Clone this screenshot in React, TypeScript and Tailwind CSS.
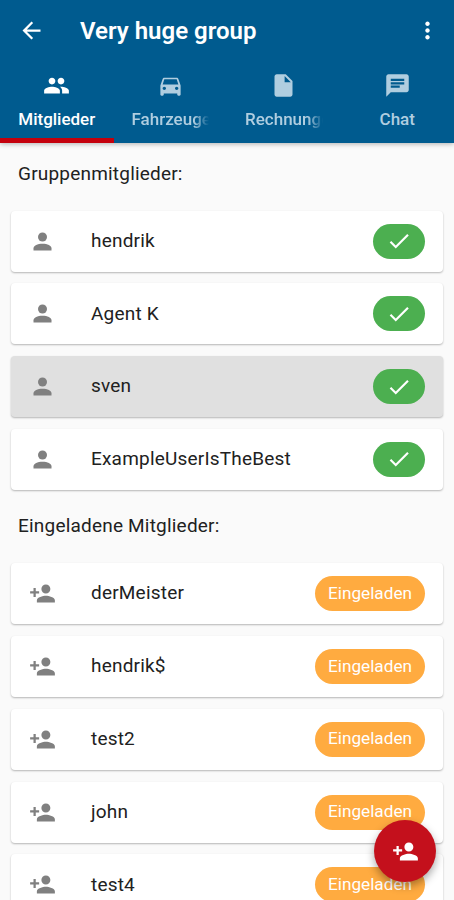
import clsx from "clsx";
import type { ReactNode } from "react";
import type { IconType } from "react-icons";
import {
  MdArrowBack,
  MdChat,
  MdCheck,
  MdDirectionsCar,
  MdInsertDriveFile,
  MdMoreVert,
  MdPeople,
  MdPersonAdd,
} from "react-icons/md";

const tabs: { label: string; icon: IconType; clipped?: boolean }[] = [
  { label: "Mitglieder", icon: MdPeople },
  { label: "Fahrzeuge", icon: MdDirectionsCar, clipped: true },
  { label: "Rechnungen", icon: MdInsertDriveFile, clipped: true },
  { label: "Chat", icon: MdChat },
];

const members = ["hendrik", "Agent K", "sven", "ExampleUserIsTheBest"];
const invited = ["derMeister", "hendrik$", "test2", "john", "test4"];

export default function App() {
  return (
    <div className="relative flex h-[900px] w-[454px] flex-col overflow-hidden bg-[#fafafa] font-[Roboto,sans-serif] text-[#212121]">
      <header className="z-10 shrink-0 bg-[#005b8f] text-white shadow-[0_1px_5px_rgba(0,0,0,0.3)]">
        <div className="flex h-[60px] items-center pr-[13px] pl-[18px]">
          <button aria-label="Zurück">
            <MdArrowBack size={27} />
          </button>
          <h1 className="ml-[35px] flex-1 pt-px text-[24px] font-semibold">Very huge group</h1>
          <button aria-label="Mehr">
            <MdMoreVert size={27} />
          </button>
        </div>
        <TabBar active="Mitglieder" />
      </header>

      <main className="min-h-0 flex-1 overflow-hidden px-[11px] pt-[0.6px]">
        <Section title="Gruppenmitglieder:">
          {members.map((name) => (
            <Row key={name} name={name} icon={<PersonIcon />} selected={name === "sven"}>
              <span className="flex h-[35px] w-[52px] items-center justify-center rounded-full bg-[#4caf50] text-white">
                <MdCheck size={26} />
              </span>
            </Row>
          ))}
        </Section>
        <Section title="Eingeladene Mitglieder:">
          {invited.map((name) => (
            <Row key={name} name={name} icon={<MdPersonAdd size={27} />}>
              <span className="flex h-[35px] w-[110px] items-center justify-center rounded-full bg-[#ffab40] text-[17.2px] text-white">
                Eingeladen
              </span>
            </Row>
          ))}
        </Section>
      </main>

      <button
        aria-label="Mitglied einladen"
        className="absolute right-[18px] bottom-[18px] z-20 flex size-[62px] items-center justify-center rounded-full bg-[#c4101c] text-white shadow-[0_4px_8px_rgba(0,0,0,0.35)]"
      >
        <MdPersonAdd size={27} />
      </button>
    </div>
  );
}

function TabBar({ active }: { active: string }) {
  return (
    <nav className="grid h-[83px] grid-cols-4">
      {tabs.map(({ label, icon: Icon, clipped }) => (
        <div
          key={label}
          className={clsx(
            "flex flex-col items-center border-b-[5px] px-[18px] pt-[12px]",
            label === active ? "border-[#c4000c] text-white" : "border-transparent text-[#b0cee0]",
          )}
        >
          <Icon size={27} className="shrink-0" />
          <span
            className={clsx(
              "mt-[8px] text-[17px] leading-[24px] font-medium whitespace-nowrap",
              clipped && "w-full overflow-hidden [mask-image:linear-gradient(to_right,black_80%,transparent)]",
            )}
          >
            {label}
          </span>
        </div>
      ))}
    </nav>
  );
}

function Section({ title, children }: { title: string; children: ReactNode }) {
  return (
    <section className="mb-[6.2px]">
      <h2 className="flex h-[61px] items-center pl-[7px] text-[19px] tracking-[0.2px]">{title}</h2>
      <ul className="flex flex-col gap-[11.8px] pt-[6px]">{children}</ul>
    </section>
  );
}

type RowProps = { name: string; icon: ReactNode; selected?: boolean; children: ReactNode };

function Row({ name, icon, selected, children }: RowProps) {
  return (
    <li
      className={clsx(
        "flex h-[61px] items-center rounded-[4px] pr-[18px] pl-[18px] shadow-[0_1px_2px_rgba(0,0,0,0.28)]",
        selected ? "bg-[#e0e0e0]" : "bg-white",
      )}
    >
      <span className="text-[#808080]">{icon}</span>
      <span className="ml-[35px] flex-1 text-[19px] tracking-[0.2px]">{name}</span>
      {children}
    </li>
  );
}

// Head and shoulders with a flatter shoulder curve than the stock one
function PersonIcon() {
  return (
    <svg width={27} height={27} viewBox="0 0 24 24" fill="currentColor">
      <circle cx="12" cy="8" r="4" />
      <path d="M12 14c4.42 0 8 1.79 8 4v2H4v-2c0-2.21 3.58-4 8-4z" />
    </svg>
  );
}
